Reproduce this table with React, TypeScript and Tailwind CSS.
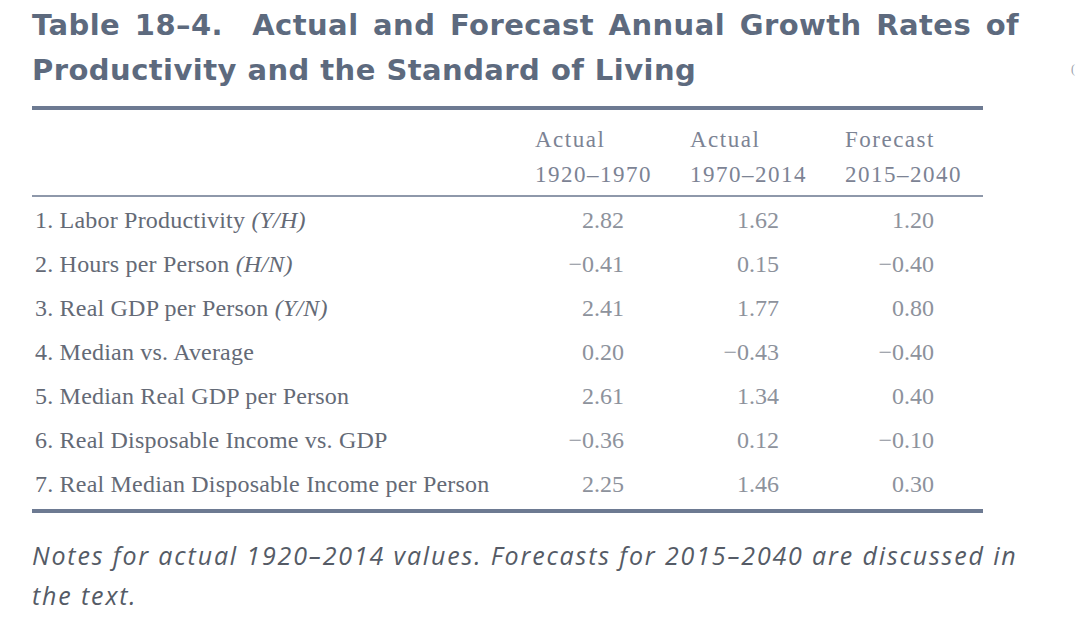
import React from "react";

const rows: { label: React.ReactNode; v: [string, string, string] }[] = [
  { label: <>1. Labor Productivity <i>(Y/H)</i></>, v: ["2.82", "1.62", "1.20"] },
  { label: <>2. Hours per Person <i>(H/N)</i></>, v: ["−0.41", "0.15", "−0.40"] },
  { label: <>3. Real GDP per Person <i>(Y/N)</i></>, v: ["2.41", "1.77", "0.80"] },
  { label: <>4. Median vs. Average</>, v: ["0.20", "−0.43", "−0.40"] },
  { label: <>5. Median Real GDP per Person</>, v: ["2.61", "1.34", "0.40"] },
  { label: <>6. Real Disposable Income vs. GDP</>, v: ["−0.36", "0.12", "−0.10"] },
  { label: <>7. Real Median Disposable Income per Person</>, v: ["2.25", "1.46", "0.30"] },
];

const heads: [string, string][] = [
  ["Actual", "1920–1970"],
  ["Actual", "1970–2014"],
  ["Forecast", "2015–2040"],
];

export default function App() {
  return (
    <div className="relative w-[1081px] h-[619px] bg-white overflow-hidden">
      <div className="pl-[32px] w-[983px]">
        <h1 className="pt-[3px] text-[29px] leading-[45px] font-bold text-[#5d6a7e] whitespace-nowrap tracking-[0.45px]" style={{ fontFamily: '"DejaVu Sans", sans-serif' }}>
          <div className="[word-spacing:4px]">Table 18–4.&nbsp; Actual and Forecast Annual Growth Rates of</div>
          <div>Productivity and the Standard of Living</div>
        </h1>
        <div className="mt-[13px] border-t-[4px] border-[#6d7a92]" />
        <div className="grid grid-cols-[486px_155px_155px_155px] pt-[12px] pb-[3px] text-[23px] leading-[35px] text-[#7c8394] tracking-[1.5px]" style={{ fontFamily: '"Liberation Serif", serif' }}>
          <div />
          {heads.map(([a, b], i) => (
            <div key={i} className="pl-[17px] whitespace-nowrap">
              <div>{a}</div>
              <div>{b}</div>
            </div>
          ))}
        </div>
        <div className="border-t-[2px] border-[#8e98aa]" />
        <div className="pt-[1px] pb-[3px] text-[24px] leading-[44px]" style={{ fontFamily: '"Liberation Serif", serif' }}>
          {rows.map((r, i) => (
            <div key={i} className="grid grid-cols-[486px_155px_155px_155px]">
              <div className="pl-[3px] text-[#646a76] whitespace-nowrap tracking-[0.2px]">{r.label}</div>
              {r.v.map((v, j) => (
                <div key={j} className="text-right pr-[49px] text-[#8d929c]">{v}</div>
              ))}
            </div>
          ))}
        </div>
        <div className="border-t-[4px] border-[#6d7a92]" />
        <p className="mt-[22px] text-[25px] leading-[40px] italic text-[#555b66] whitespace-nowrap tracking-[1.85px]" style={{ fontFamily: '"Open Sans", sans-serif' }}>
          <span className="block">Notes for actual 1920–2014 values. Forecasts for 2015–2040 are discussed in</span>
          <span className="block">the text.</span>
        </p>
      </div>
      <span className="absolute left-[1071px] top-[60px] text-[12px] text-[#9aa0aa]" style={{ fontFamily: '"Liberation Serif", serif' }}>(</span>
    </div>
  );
}
